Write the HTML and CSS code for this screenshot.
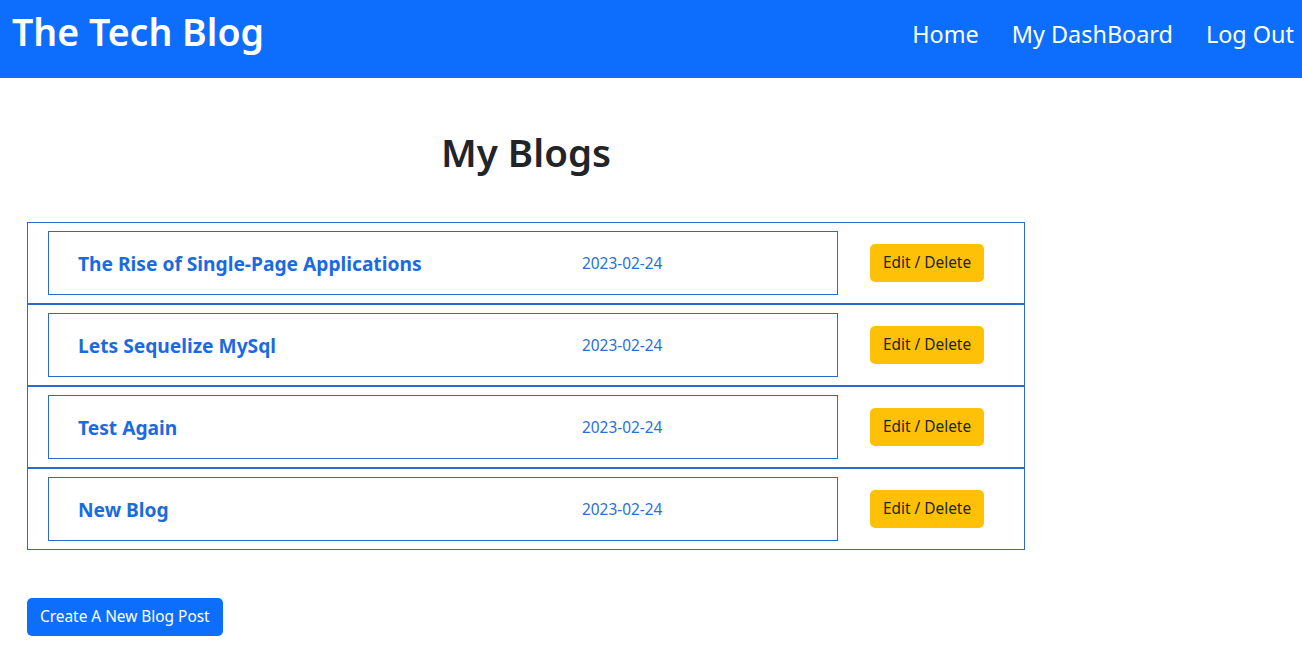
FILE: index.html
```html
<!DOCTYPE html>
<html lang="en">
<head>
<meta charset="utf-8">
<title>The Tech Blog</title>
<link rel="stylesheet" href="styles.css">
</head>
<body>
<header class="navbar">
  <a class="brand" href="#">The Tech Blog</a>
  <nav class="nav-links">
    <a class="nav-link" href="#">Home</a>
    <a class="nav-link" href="#">My DashBoard</a>
    <a class="nav-link" href="#">Log Out</a>
  </nav>
</header>
<main class="main">
  <h1 class="page-title">My Blogs</h1>
  <ul class="blog-list">
    <li class="blog-row">
      <div class="blog-card"><span class="blog-title">The Rise of Single-Page Applications</span><span class="blog-date">2023-02-24</span></div>
      <div class="blog-actions"><button class="btn btn-warning">Edit / Delete</button></div>
    </li>
    <li class="blog-row">
      <div class="blog-card"><span class="blog-title">Lets Sequelize MySql</span><span class="blog-date">2023-02-24</span></div>
      <div class="blog-actions"><button class="btn btn-warning">Edit / Delete</button></div>
    </li>
    <li class="blog-row">
      <div class="blog-card"><span class="blog-title">Test Again</span><span class="blog-date">2023-02-24</span></div>
      <div class="blog-actions"><button class="btn btn-warning">Edit / Delete</button></div>
    </li>
    <li class="blog-row">
      <div class="blog-card"><span class="blog-title">New Blog</span><span class="blog-date">2023-02-24</span></div>
      <div class="blog-actions"><button class="btn btn-warning">Edit / Delete</button></div>
    </li>
  </ul>
  <button class="btn btn-primary">Create A New Blog Post</button>
</main>
</body>
</html>
```
FILE: styles.css
```css
* { box-sizing: border-box; }
body {
  margin: 0;
  font-family: "Noto Sans", "Open Sans", sans-serif;
  color: #212529;
  background: #fff;
}
.navbar {
  height: 78px;
  background: #0d6efd;
  display: flex;
  align-items: center;
  justify-content: space-between;
  padding: 0 8px 0 12px;
}
.brand {
  color: #fff;
  text-decoration: none;
  font-size: 37.5px;
  font-weight: 600;
  line-height: 1;
  margin-top: -14px;
}
.nav-links {
  display: flex;
  gap: 33px;
}
.nav-link {
  color: #fff;
  text-decoration: none;
  font-size: 23.4px;
  line-height: 1;
  margin-top: -8px;
}
.main {
  width: 1025px;
  padding-left: 27px;
}
.page-title {
  margin: 51px 0 47px;
  text-align: center;
  font-size: 38.5px;
  font-weight: 600;
  line-height: 1.2;
  color: #212529;
}
.blog-list {
  list-style: none;
  margin: 0 0 48px;
  padding: 0;
}
.blog-row {
  display: flex;
  align-items: center;
  height: 82px;
  border: 1px solid #2a6dc8;
  padding: 0 20px;
}
.blog-card {
  width: 790px;
  height: 64px;
  border: 1px solid #2a6dc8;
  display: grid;
  grid-template-columns: 504px auto;
  align-items: center;
  padding-left: 29px;
}
.blog-title {
  font-size: 19.2px;
  font-weight: 700;
  color: #1a6be0;
}
.blog-date {
  font-size: 15.4px;
  color: #2a6ed8;
}
.blog-actions {
  margin-left: 32px;
  display: flex;
  align-items: center;
}
.btn {
  font-family: inherit;
  font-size: 15.4px;
  line-height: 24px;
  padding: 7px 13px;
  border: 0;
  border-radius: 5px;
  cursor: pointer;
}
.btn-warning {
  background: #ffc107;
  color: #212529;
}
.btn-primary {
  background: #0d6efd;
  color: #fff;
}
```
